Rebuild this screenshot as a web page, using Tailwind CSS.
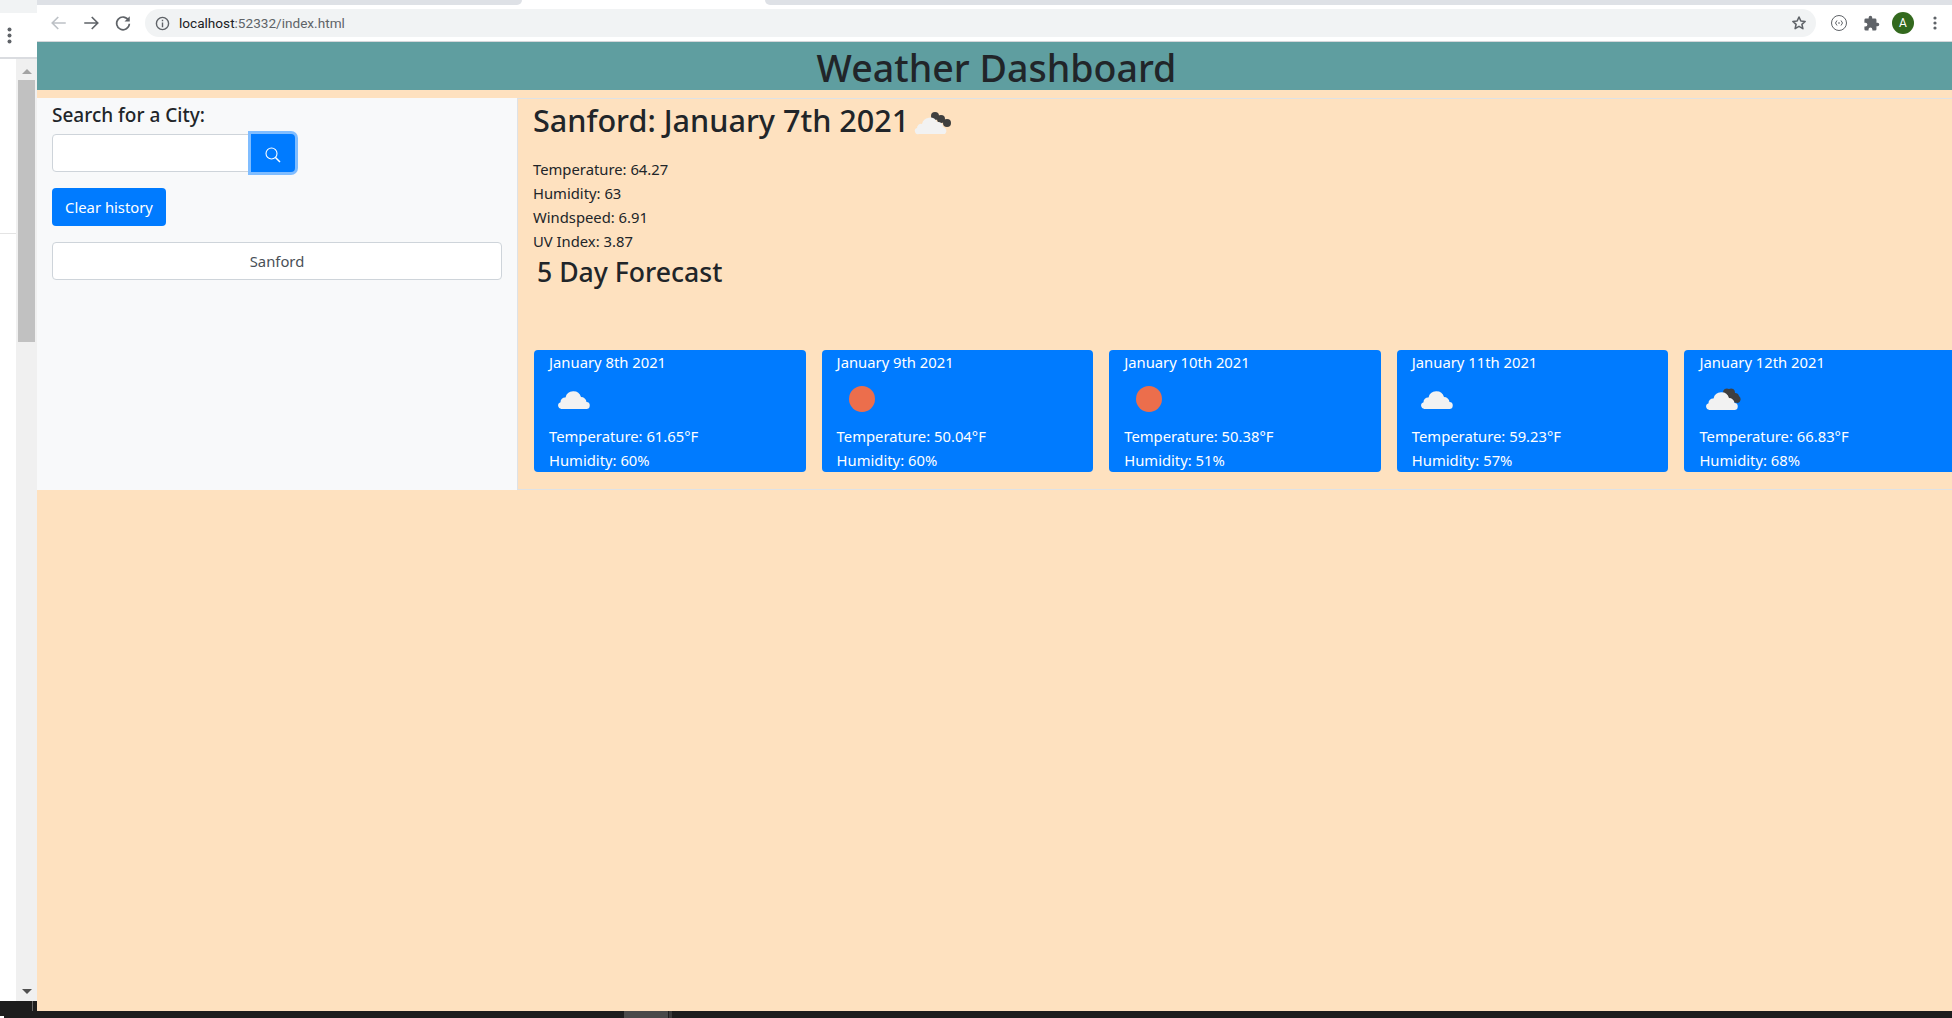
<!doctype html>
<html>
<head>
<meta charset="utf-8">
<title>Weather Dashboard</title>
<script src="https://cdn.jsdelivr.net/npm/@tailwindcss/browser@4"></script>
</head>
<body class="relative h-[1018px] w-[1952px] overflow-hidden bg-[#1d1d1d] font-['Noto_Sans',sans-serif] text-[#212529]">

<div class="flex h-[1011px]">
  <!-- left window edge -->
  <div class="flex w-[37px] shrink-0 flex-col">
    <div class="h-[13px] bg-[#f1f3f4]"></div>
    <div class="flex h-[46px] items-center border-b-2 border-[#dadce0] bg-white pl-[7px]">
      <svg width="5" height="17" viewBox="0 0 5 17" fill="#5f6368"><circle cx="2.5" cy="2.5" r="2"/><circle cx="2.5" cy="8.5" r="2"/><circle cx="2.5" cy="14.5" r="2"/></svg>
    </div>
    <div class="flex min-h-0 flex-1 bg-white">
      <div class="mt-[174px] h-px w-[16px] bg-[#e4e4e4]"></div>
      <div class="flex w-[21px] flex-col items-center bg-[#f0f0f0]">
        <div class="mt-[10px] h-0 w-0 border-x-[5px] border-b-[5px] border-x-transparent border-b-[#a3a3a3]"></div>
        <div class="mt-[6px] h-[262px] w-[17px] bg-[#c1c1c1]"></div>
        <div class="mt-auto mb-[7px] h-0 w-0 border-x-[5px] border-t-[5px] border-x-transparent border-t-[#505050]"></div>
      </div>
    </div>
    <div class="h-[10px] bg-[#1d1d1d]"></div>
  </div>

  <div class="flex min-w-0 flex-1 flex-col bg-[#fee1bf]">
    <!-- browser chrome -->
    <div class="flex h-[5px] bg-white">
      <div class="w-[485px] rounded-br-md bg-[#dee1e6]"></div>
      <div class="w-[243px]"></div>
      <div class="flex-1 rounded-bl-md bg-[#dee1e6]"></div>
    </div>
    <div class="flex h-[37px] items-center border-b border-[#d4d6da] bg-white">
      <svg class="ml-[13px]" width="18" height="18" viewBox="0 0 24 24" fill="none" stroke="#bdc1c6" stroke-width="2.2"><path d="M21 12H4M11 4l-8 8 8 8"/></svg>
      <svg class="ml-[14px]" width="18" height="18" viewBox="0 0 24 24" fill="none" stroke="#5f6368" stroke-width="2.2"><path d="M3 12h17M13 4l8 8-8 8"/></svg>
      <svg class="ml-[14px]" width="18" height="18" viewBox="0 0 24 24" fill="none" stroke="#5f6368" stroke-width="2.2"><path d="M19.5 8.5A8.5 8.5 0 1 0 20.5 13"/><path d="M21 3v7h-7z" fill="#5f6368" stroke="none"/></svg>
      <div class="ml-[13px] flex h-[28px] flex-1 items-center rounded-full bg-[#f1f3f4] pl-[10px] pr-[9px]">
        <svg width="15" height="15" viewBox="0 0 16 16" fill="none" stroke="#5f6368" stroke-width="1.5"><circle cx="8" cy="8" r="6.5"/><path d="M8 7v5M8 4v1.6"/></svg>
        <span class="ml-[9px] font-['Roboto',sans-serif] text-[13.6px] text-[#202124]">localhost<span class="text-[#5f6368]">:52332/index.html</span></span>
        <svg class="ml-auto" width="16" height="16" viewBox="0 0 24 24" fill="none" stroke="#5f6368" stroke-width="2.4" stroke-linejoin="round"><path d="M12 3l2.8 6 6.4.7-4.8 4.3 1.4 6.4L12 17.1l-5.800 3.300 1.400-6.400L2.800 9.700 9.200 9z"/></svg>
      </div>
      <svg class="ml-[14px]" width="18" height="18" viewBox="0 0 18 18" fill="none" stroke="#5f6368" stroke-width="1"><circle cx="9" cy="9" r="7.500"/><path d="M7 6.500 5.500 9 7 11.500M11 6.500 12.500 9 11 11.500M8 9h2"/></svg>
      <svg class="ml-[14.500px]" width="17" height="17" viewBox="0 0 24 24" fill="#5f6368"><path d="M20.500 11H19V7a2 2 0 0 0-2-2h-4V3.500a2.500 2.500 0 0 0-5 0V5H4a2 2 0 0 0-2 2v3.800h1.500a2.700 2.700 0 0 1 0 5.400H2V20a2 2 0 0 0 2 2h3.800v-1.500a2.700 2.700 0 0 1 5.400 0V22H17a2 2 0 0 0 2-2v-4h1.500a2.500 2.500 0 0 0 0-5z"/></svg>
      <div class="ml-[12.500px] flex h-[22px] w-[22px] items-center justify-center rounded-full bg-[#33691e] font-['Roboto',sans-serif] text-[12px] text-white">A</div>
      <svg class="ml-[19px] mr-[15px]" width="4" height="14" viewBox="0 0 4 14" fill="#5f6368"><circle cx="2" cy="2" r="1.600"/><circle cx="2" cy="7" r="1.600"/><circle cx="2" cy="12" r="1.600"/></svg>
    </div>

    <!-- page -->
    <header class="h-[48px] bg-[#5f9ea0] pl-[4px] text-center text-[37.6px] leading-[52px] font-medium">Weather Dashboard</header>

    <div class="mt-[8px] flex h-[392px]">
      <aside class="w-[480px] shrink-0 bg-[#f8f9fa] px-[15px]">
        <label class="mt-[2px] block text-[19px] leading-[30px] font-medium">Search for a City:</label>
        <div class="mt-[4px] flex">
          <input type="text" class="h-[38px] w-[199px] rounded-l border border-[#ced4da] bg-white">
          <button class="flex h-[38px] w-[44px] items-center justify-center rounded-r bg-[#007bff] ring-[3px] ring-[#80bdff]">
            <svg class="mt-[3px]" width="16" height="16" viewBox="0 0 16 16" fill="none" stroke="white" stroke-width="1.100"><circle cx="6.500" cy="6.500" r="5.500"/><path d="M10.500 10.500 15 15" stroke-width="1.500"/></svg>
          </button>
        </div>
        <button class="mt-[16px] block h-[38px] w-[114px] rounded bg-[#007bff] text-[14.8px] text-white">Clear history</button>
        <button class="mt-[16px] block h-[38px] w-[450px] rounded border border-[#ced4da] bg-white text-[14.8px] text-[#495057]">Sanford</button>
      </aside>

      <main class="min-w-0 flex-1 border-y border-l border-[#dee2e6] pl-[15px]">
        <div class="-mt-px flex h-[44px] items-center">
          <h2 class="text-[30.6px] leading-[44px] font-medium">Sanford: January 7th 2021</h2>
          <svg class="ml-[4px] mt-[8px]" width="40" height="30" viewBox="0 0 40 30">
            <circle cx="22" cy="7" r="4" fill="#3f3f3f"/>
            <circle cx="28" cy="10" r="4" fill="#3f3f3f"/>
            <circle cx="34" cy="14" r="4" fill="#3f3f3f"/>
            <path d="M6 25a3 3 0 0 1-2-6 4 4 0 0 1 5-4 8 8 0 0 1 15-2 5 5 0 0 1 6 5 4 4 0 0 1 2 7z" fill="#f2f2f2"/>
          </svg>
        </div>
        <div class="mt-[15px] text-[14.8px] leading-[24px]">
          <p>Temperature: 64.27</p>
          <p>Humidity: 63</p>
          <p>Windspeed: 6.91</p>
          <p>UV Index: 3.87</p>
        </div>
        <h3 class="mt-[2px] pl-[4px] text-[26.6px] leading-[34px] font-medium">5 Day Forecast</h3>

        <div class="mt-[61px] flex gap-[16px] overflow-hidden pl-[1px] text-[14.8px] leading-[24px] text-white">

          <div class="h-[122px] w-[271.6px] shrink-0 rounded bg-[#007bff] px-[15px]">
            <p>January 8th 2021</p>
            <svg width="50" height="50" viewBox="0 0 50 50"><path d="M13 35a3.500 3.500 0 0 1-1.500-6.800 4.500 4.500 0 0 1 5-4.700 8 8 0 0 1 15.500-.5 5.500 5.500 0 0 1 5.500 5 3.500 3.500 0 0 1-.500 7z" fill="#f2f2f2"/></svg>
            <p>Temperature: 61.65°F</p>
            <p>Humidity: 60%</p>
          </div>

          <div class="h-[122px] w-[271.6px] shrink-0 rounded bg-[#007bff] px-[15px]">
            <p>January 9th 2021</p>
            <svg width="50" height="50" viewBox="0 0 50 50"><circle cx="25" cy="25" r="13" fill="#ec6e4c"/></svg>
            <p>Temperature: 50.04°F</p>
            <p>Humidity: 60%</p>
          </div>

          <div class="h-[122px] w-[271.6px] shrink-0 rounded bg-[#007bff] px-[15px]">
            <p>January 10th 2021</p>
            <svg width="50" height="50" viewBox="0 0 50 50"><circle cx="25" cy="25" r="13" fill="#ec6e4c"/></svg>
            <p>Temperature: 50.38°F</p>
            <p>Humidity: 51%</p>
          </div>

          <div class="h-[122px] w-[271.6px] shrink-0 rounded bg-[#007bff] px-[15px]">
            <p>January 11th 2021</p>
            <svg width="50" height="50" viewBox="0 0 50 50"><path d="M13 35a3.500 3.500 0 0 1-1.500-6.800 4.500 4.500 0 0 1 5-4.700 8 8 0 0 1 15.500-.5 5.500 5.500 0 0 1 5.500 5 3.500 3.500 0 0 1-.500 7z" fill="#f2f2f2"/></svg>
            <p>Temperature: 59.23°F</p>
            <p>Humidity: 57%</p>
          </div>

          <div class="h-[122px] w-[271.6px] shrink-0 rounded bg-[#007bff] px-[15px]">
            <p>January 12th 2021</p>
            <svg width="50" height="50" viewBox="0 0 50 50">
              <path d="M24 19a4 4 0 0 1 6-4 4 4 0 0 1 6 4 4 4 0 0 1 4 3 4 4 0 0 1-1 7l-14-2z" fill="#3f3f3f"/>
              <path d="M11 36a3.500 3.500 0 0 1-1.500-6.800 4.500 4.500 0 0 1 5-4.700 8 8 0 0 1 15.500-.5 5.500 5.500 0 0 1 5.500 5 3.500 3.500 0 0 1-.500 7z" fill="#f2f2f2"/>
            </svg>
            <p>Temperature: 66.83°F</p>
            <p>Humidity: 68%</p>
          </div>

        </div>
      </main>
    </div>
  </div>
</div>

<!-- taskbar sliver -->
<div class="flex h-[7px] overflow-hidden bg-[#1d1d1d]">
  <div class="ml-[624px] h-full w-[44px] bg-[#4a4a4a]"></div>
  <div class="ml-px h-full w-[3px] bg-[#3a3a3a]"></div>
  <span class="ml-auto mr-[5px] mt-[5px] font-['Roboto',sans-serif] text-[12px] leading-[14px] text-white">7:41 PM</span>
</div>
<div class="absolute top-[1001px] left-[32px] h-[10px] w-px bg-[#6a6a6a]"></div>
<div class="absolute top-[1016px] left-0 h-[2px] w-[4px] bg-white"></div>

</body>
</html>
